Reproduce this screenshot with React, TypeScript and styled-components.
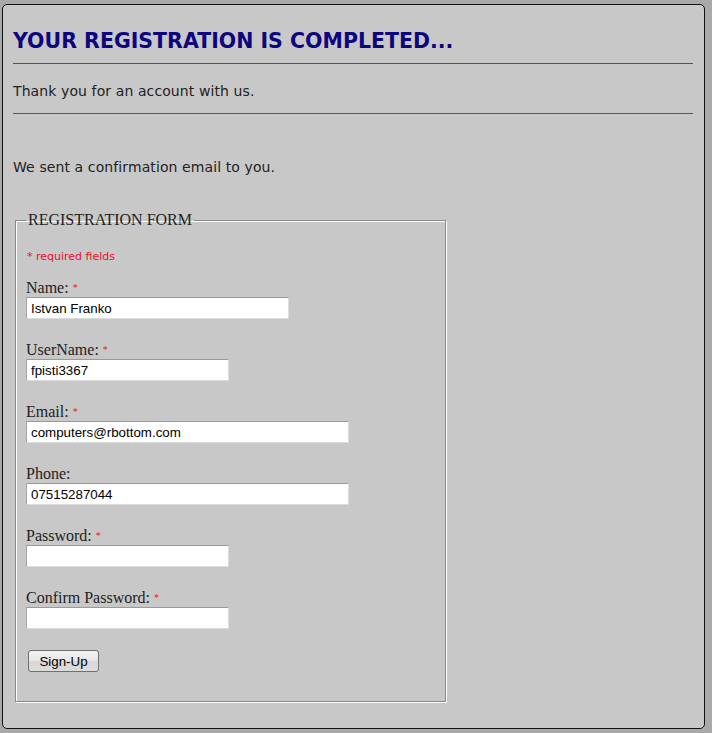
import styled, { createGlobalStyle } from "styled-components";

const GlobalStyle = createGlobalStyle`
  html, body {
    margin: 0;
    padding: 0;
    background: #a9a9a9;
  }
  body {
    padding: 4px 7px 4px 2px;
    font-family: "Liberation Serif", "Times New Roman", serif;
  }
`;

const Panel = styled.div`
  background: #c8c8c8;
  border: 1px solid #111;
  border-radius: 5px;
  height: 725px;
  box-sizing: border-box;
  padding: 25px 11px 0 10px;
`;

const Heading = styled.h1`
  margin: 0;
  font-family: Verdana, "DejaVu Sans", sans-serif;
  font-size: 20.5px;
  font-weight: bold;
  color: #0d0580;
  line-height: 23px;
`;

const Rule = styled.hr<{ $top: number }>`
  border: 0;
  border-top: 1px solid #555;
  margin: ${(p) => p.$top}px 0 0 0;
  height: 0;
`;

const Text = styled.p<{ $top: number; $bottom: number }>`
  margin: ${(p) => p.$top}px 0 ${(p) => p.$bottom}px 0;
  font-family: Verdana, "DejaVu Sans", sans-serif;
  font-size: 14px;
  letter-spacing: 0.1px;
  line-height: 16px;
  color: #222;
`;

const Fieldset = styled.fieldset`
  width: 431px;
  box-sizing: border-box;
  margin: 36px 0 0 2px;
  padding: 0 0 29px 10px;
  border: 1px solid #8a8a8a;
  box-shadow: 1px 1px 0 #fff, inset 1px 1px 0 #fff;
`;

const Legend = styled.legend`
  padding: 0 2px;
  margin-left: 0;
  font-size: 16px;
  color: #222;
`;

const Required = styled.div`
  font-family: Verdana, "DejaVu Sans", sans-serif;
  font-size: 11px;
  color: #e8102a;
  margin: 22px 0 16px 1px;
  line-height: 12px;
`;

const Row = styled.div`
  display: flex;
  flex-direction: column;
  align-items: flex-start;
  margin-bottom: 22px;
`;

const Label = styled.label`
  font-size: 16px;
  line-height: 18px;
  color: #222;
`;

const Star = styled.span`
  color: #ff1010;
  font-size: 10px;
  margin-left: 4px;
  vertical-align: 2px;
`;

const Input = styled.input<{ $w: number }>`
  width: ${(p) => p.$w}px;
  height: 22px;
  box-sizing: border-box;
  border: 1px solid #a5a5a5;
  border-top-color: #9a9a9a;
  border-bottom-color: #dcdcdc;
  border-right-color: #dcdcdc;
  background: #fff;
  padding: 0 4px;
  font-family: "Liberation Sans", Arial, sans-serif;
  font-size: 13.33px;
  color: #000;
  outline: none;
`;

const Button = styled.button`
  display: block;
  margin: -1px 0 0 2px;
  width: 71px;
  height: 22px;
  border: 1px solid #707070;
  border-radius: 3px;
  background: linear-gradient(#f3f3f3, #e6e6e6 50%, #d8d8d8 51%, #dcdcdc);
  font-family: "Liberation Sans", Arial, sans-serif;
  font-size: 13.33px;
  color: #000;
  padding: 0;
`;

const fields = [
  { label: "Name:", req: true, value: "Istvan Franko", w: 263, type: "text" },
  { label: "UserName:", req: true, value: "fpisti3367", w: 203, type: "text" },
  { label: "Email:", req: true, value: "computers@rbottom.com", w: 323, type: "text" },
  { label: "Phone:", req: false, value: "07515287044", w: 323, type: "text" },
  { label: "Password:", req: true, value: "", w: 203, type: "password" },
  { label: "Confirm Password:", req: true, value: "", w: 203, type: "password" },
];

export default function App() {
  return (
    <>
      <GlobalStyle />
      <Panel>
        <Heading>YOUR REGISTRATION IS COMPLETED...</Heading>
        <Rule $top={10} />
        <Text $top={19} $bottom={14}>Thank you for an account with us.</Text>
        <Rule $top={0} />
        <Text $top={45} $bottom={0}>We sent a confirmation email to you.</Text>
        <Fieldset>
          <Legend>REGISTRATION FORM</Legend>
          <Required>* required fields</Required>
          {fields.map((f) => (
            <Row key={f.label}>
              <Label>
                {f.label}
                {f.req && <Star>*</Star>}
              </Label>
              <Input $w={f.w} type={f.type} defaultValue={f.value} />
            </Row>
          ))}
          <Button type="button">Sign-Up</Button>
        </Fieldset>
      </Panel>
    </>
  );
}
